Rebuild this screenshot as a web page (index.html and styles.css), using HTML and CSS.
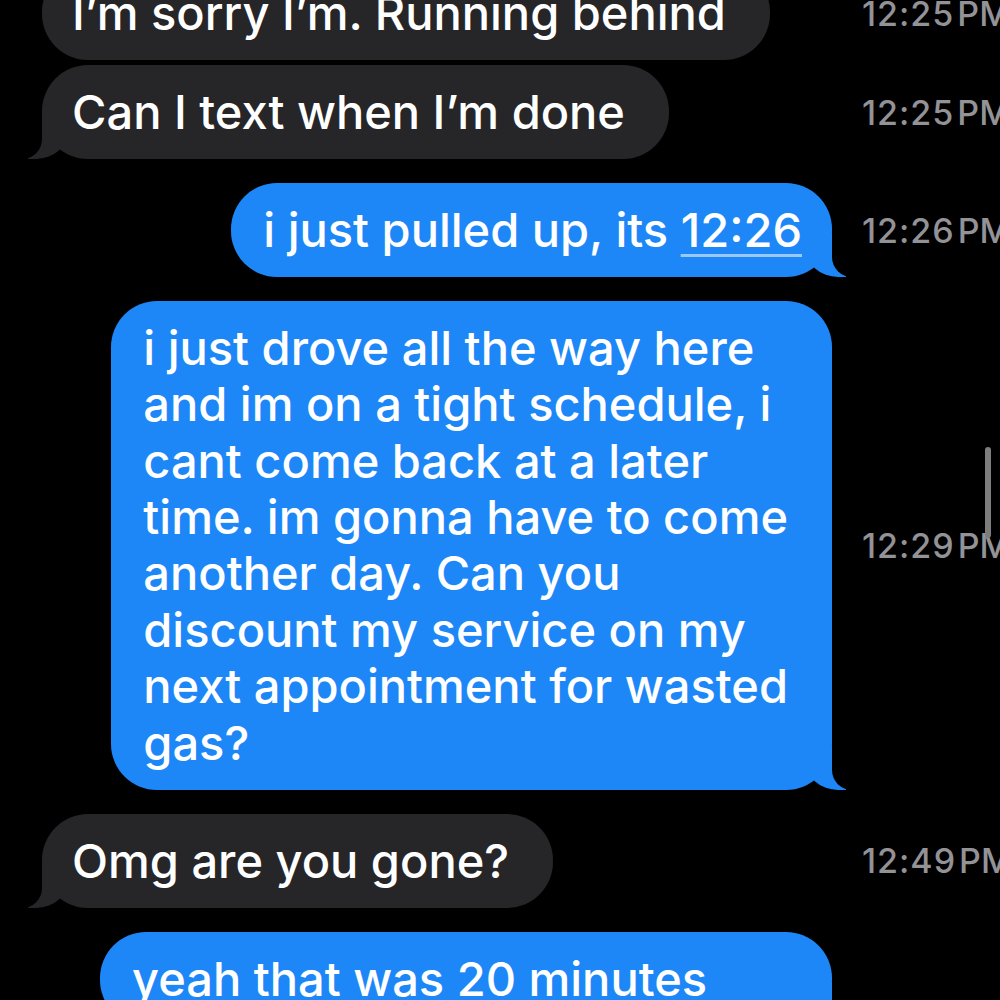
FILE: index.html
```html
<!DOCTYPE html>
<html lang="en">
<head>
	<meta charset="UTF-8">
	<title>Messages</title>
	<link rel="stylesheet" href="styles.css">
</head>
<body>
	<div class="thread">
		<div class="row in">
			<div class="lane"><div class="bubble">I’m sorry I’m. Running behind</div></div>
			<span class="time">12:25<span class="ampm">PM</span></span>
		</div>
		<div class="row in cont">
			<div class="lane"><div class="bubble tail">Can I text when I’m done</div></div>
			<span class="time">12:25<span class="ampm">PM</span></span>
		</div>
		<div class="row out">
			<div class="lane"><div class="bubble tail short">i just pulled up, its <span class="link">12:26</span></div></div>
			<span class="time">12:26<span class="ampm">PM</span></span>
		</div>
		<div class="row out">
			<div class="lane"><div class="bubble tail">i just drove all the way here<br>and im on a tight schedule, i<br>cant come back at a later<br>time. im gonna have to come<br>another day. Can you<br>discount my service on my<br>next appointment for wasted<br>gas?</div></div>
			<span class="time">12:29<span class="ampm">PM</span></span>
		</div>
		<div class="row in">
			<div class="lane"><div class="bubble tail">Omg are you gone?</div></div>
			<span class="time">12:49<span class="ampm">PM</span></span>
		</div>
		<div class="row out">
			<div class="lane"><div class="bubble tail wide">yeah that was 20 minutes</div></div>
		</div>
	</div>
	<div class="scrollbar"></div>
</body>
</html>
```

FILE: styles.css
```css
html, body{
	margin: 0;
	height: 1000px;
	overflow: hidden;
	background: #000;
}
body{
	font-family: Inter, "Noto Sans", sans-serif;
	color: #fff;
	position: relative;
}
.thread{
	margin-top: -34px;
	padding-left: 28px;
}
.row{
	display: flex;
	align-items: center;
	margin-top: 24px;
}
.row.cont{
	margin-top: 5px;
}
.row:first-child{
	margin-top: 0;
}
.lane{
	width: 820px;
	display: flex;
	flex-shrink: 0;
	box-sizing: border-box;
}
.in .lane{
	justify-content: flex-start;
	padding-left: 14px;
}
.out .lane{
	justify-content: flex-end;
	padding-right: 16px;
}
.bubble{
	position: relative;
	max-width: 732px;
	box-sizing: border-box;
	padding: 18.8px 44px 18.8px 30px;
	border-radius: 46px;
	font-size: 47px;
	font-weight: 500;
	line-height: 56.4px;
	white-space: nowrap;
}
.in .bubble{
	background: #262629;
}
.out .bubble{
	background: #1e87f7;
	padding-left: 32px;
}
.bubble.short{
	padding-right: 30px;
}
.bubble.wide{
	width: 732px;
}

/* tails */
.bubble.tail::before,
.bubble.tail::after{
	content: "";
	position: absolute;
	bottom: 0;
	height: 44px;
}
.in .bubble.tail::before{
	left: -14px;
	width: 40px;
	background: #262629;
	border-bottom-right-radius: 32px 28px;
}
.in .bubble.tail::after{
	left: -24px;
	width: 24px;
	background: #000;
	border-bottom-right-radius: 20px;
}
.out .bubble.tail::before{
	right: -14px;
	width: 40px;
	background: #1e87f7;
	border-bottom-left-radius: 32px 28px;
}
.out .bubble.tail::after{
	right: -24px;
	width: 24px;
	background: #000;
	border-bottom-left-radius: 20px;
}

.link{
	text-decoration: underline;
	text-decoration-color: rgba(255,255,255,0.55);
	text-decoration-thickness: 3px;
	text-underline-offset: 7px;
}
.time{
	margin-left: 14px;
	font-size: 34px;
	font-weight: 500;
	color: #929297;
	white-space: nowrap;
	letter-spacing: 1px;
}
.ampm{
	margin-left: 3px;
	letter-spacing: 0;
}
.scrollbar{
	position: absolute;
	left: 985px;
	top: 447px;
	width: 6px;
	height: 91px;
	border-radius: 3px;
	background: #7d7d7d;
}
```
